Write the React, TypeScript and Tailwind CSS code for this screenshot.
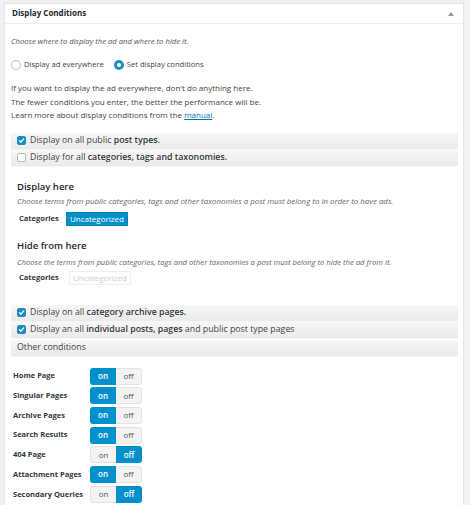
import React from "react";

const font = { fontFamily: '"Open Sans", "DejaVu Sans", sans-serif' };

function Check({ checked }: { checked: boolean }) {
  return (
    <span
      className={
        "inline-flex items-center justify-center w-[9px] h-[9px] rounded-[2px] border mr-[4px] shrink-0 " +
        (checked ? "bg-[#1e8cbe] border-[#1e8cbe]" : "bg-white border-[#b4b9be]")
      }
    >
      {checked && (
        <svg width="7" height="7" viewBox="0 0 10 10">
          <path d="M2 5.2 L4.2 7.4 L8.2 2.6" stroke="white" strokeWidth="1.8" fill="none" strokeLinecap="round" strokeLinejoin="round" />
        </svg>
      )}
    </span>
  );
}

function Bar({ children, extra = "" }: { children: React.ReactNode; extra?: string }) {
  return (
    <div
      className={
        "h-[17px] flex items-center pl-[6px] bg-gradient-to-b from-[#f7f7f7] to-[#eaeaea] text-[8.8px] text-[#444] border-b border-[#f6f6f6] " +
        extra
      }
    >
      {children}
    </div>
  );
}

function Toggle({ on }: { on: boolean }) {
  return (
    <div className="flex h-[17px] w-[52px] text-[8px]">
      <div
        className={
          "w-[26px] flex items-center justify-center rounded-l-[3px] " +
          (on ? "bg-[#0091cd] text-white font-semibold" : "bg-[#f3f3f3] text-[#555] border border-r-0 border-[#e2e2e2]")
        }
      >
        on
      </div>
      <div
        className={
          "w-[26px] flex items-center justify-center rounded-r-[3px] " +
          (!on ? "bg-[#0091cd] text-white font-semibold" : "bg-[#f3f3f3] text-[#555] border border-l-0 border-[#e2e2e2]")
        }
      >
        off
      </div>
    </div>
  );
}

const conditions: [string, boolean][] = [
  ["Home Page", true],
  ["Singular Pages", true],
  ["Archive Pages", true],
  ["Search Results", true],
  ["404 Page", false],
  ["Attachment Pages", true],
  ["Secondary Queries", false],
];

export default function App() {
  return (
    <div style={font} className="w-[470px] h-[505px] bg-[#f1f1f1] overflow-hidden pt-[3px] pl-[4px] pr-[6px]">
      <div className="bg-white border border-[#e5e5e5] h-[520px]">
        <div className="h-[20px] border-b border-[#eeeeee] flex items-center justify-between pl-[7px] pr-[9px]">
          <span className="text-[8px] font-bold text-[#23282d] -mt-[1px]">Display Conditions</span>
          <svg width="6" height="4" viewBox="0 0 6 4">
            <path d="M0 4 L3 0 L6 4 Z" fill="#999" />
          </svg>
        </div>
        <div className="pl-[6px] pr-[5px] text-[#444]">
          <p className="mt-[11px] text-[7.7px] italic text-[#555] leading-[13px]">
            Choose where to display the ad and where to hide it.
          </p>
          <div className="mt-[10px] flex items-center text-[7.6px] leading-[13px]">
            <span className="w-[10px] h-[10px] rounded-full border border-[#b4b9be] bg-white mr-[3px]" />
            <span className="mr-[10px]">Display ad everywhere</span>
            <span className="w-[10px] h-[10px] rounded-full bg-[#1e8cbe] mr-[3px] flex items-center justify-center">
              <span className="w-[4px] h-[4px] rounded-full bg-white" />
            </span>
            <span>Set display conditions</span>
          </div>
          <div className="mt-[10px] text-[8px] leading-[13.5px]">
            <p>If you want to display the ad everywhere, don't do anything here.</p>
            <p>The fewer conditions you enter, the better the performance will be.</p>
            <p>
              Learn more about display conditions from the{" "}
              <span className="text-[#0073aa] underline">manual</span>.
            </p>
          </div>
          <div className="mt-[11px]">
            <Bar>
              <Check checked />
              <span>
                Display on all public <span className="font-semibold text-[#32373c]">post types.</span>
              </span>
            </Bar>
            <Bar>
              <Check checked={false} />
              <span>
                Display for all <span className="font-semibold text-[#32373c]">categories, tags and taxonomies.</span>
              </span>
            </Bar>
          </div>
          <div className="pl-[6px]">
            <h3 className="mt-[12px] text-[9.5px] font-semibold text-[#23282d] leading-[15px]">Display here</h3>
            <p className="mt-[1px] text-[7.9px] italic text-[#666] leading-[12px]">
              Choose terms from public categories, tags and other taxonomies a post must belong to in order to have ads.
            </p>
            <div className="mt-[5px] flex items-center h-[14px]">
              <span className="w-[49px] pl-[2px] text-[7.5px] font-bold text-[#32373c]">Categories</span>
              <span className="h-[14px] px-[3px] flex items-center bg-[#0091cd] text-white text-[8px] border border-[#0a7fb3]">
                Uncategorized
              </span>
            </div>
            <h3 className="mt-[12px] text-[9.5px] font-semibold text-[#23282d] leading-[15px]">Hide from here</h3>
            <p className="mt-[3px] text-[7.7px] italic text-[#666] leading-[12px]">
              Choose the terms from public categories, tags and other taxonomies a post must belong to hide the ad from it.
            </p>
            <div className="mt-[3px] flex items-center h-[14px]">
              <span className="w-[52px] pl-[2px] text-[7.5px] font-bold text-[#32373c]">Categories</span>
              <span className="h-[14px] px-[3px] flex items-center bg-white text-[#ccc] text-[8px] border border-[#eee]">
                Uncategorized
              </span>
            </div>
          </div>
          <div className="mt-[20px]">
            <Bar>
              <Check checked />
              <span>
                Display on all <span className="font-semibold text-[#32373c]">category archive pages.</span>
              </span>
            </Bar>
            <Bar>
              <Check checked />
              <span>
                Display an all <span className="font-semibold text-[#32373c]">individual posts, pages</span> and public post type pages
              </span>
            </Bar>
            <Bar extra="mt-[1px]">
              <span>Other conditions</span>
            </Bar>
          </div>
          <div className="mt-[11px] pl-[2px] flex flex-col gap-[2.7px]">
            {conditions.map(([label, on]) => (
              <div key={label} className="flex items-center h-[17px]">
                <span className="w-[77px] text-[7.5px] font-bold text-[#32373c]">{label}</span>
                <Toggle on={on} />
              </div>
            ))}
          </div>
        </div>
      </div>
    </div>
  );
}
